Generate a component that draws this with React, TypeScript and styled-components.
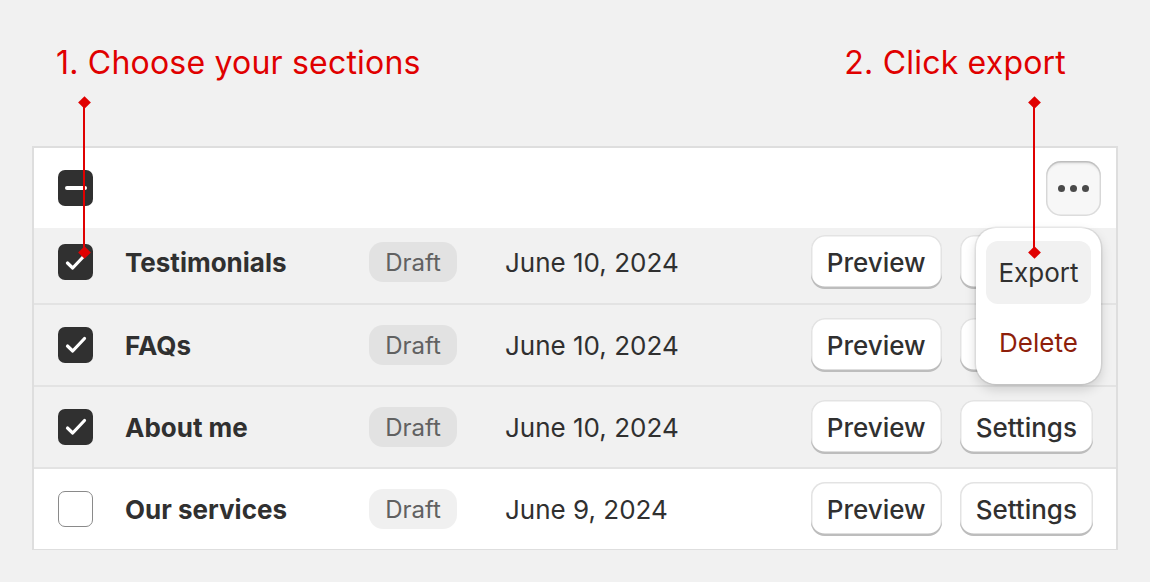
import React, { ReactElement } from 'react'
import styled, { createGlobalStyle } from 'styled-components'

const GlobalStyle = createGlobalStyle`
  html, body {
    margin: 0;
    padding: 0;
    background: #f1f1f1;
  }
  body {
    font-family: Inter, "Noto Sans", sans-serif;
    color: #303030;
  }
`

const Page = styled.div`
  position: relative;
  width: 1150px;
  height: 582px;
  overflow: hidden;
`

const Titles = styled.div`
  display: flex;
  justify-content: space-between;
  padding: 44px 84px 0 56px;
  height: 38px;
`

const Title = styled.div`
  font-size: 32px;
  line-height: 38px;
  color: #e00000;
  letter-spacing: 0.2px;
`

const Card = styled.div`
  margin: 64px 0 0 32px;
  width: 1082px;
  border: 2px solid #dedede;
  border-bottom-width: 1.5px;
  background: #fff;
`

const Header = styled.div`
  display: flex;
  align-items: center;
  justify-content: space-between;
  height: 80px;
  padding: 0 15px 0 24px;
  background: #fff;
`

const Row = styled.div<{ $selected: boolean; $first?: boolean }>`
  display: grid;
  grid-template-columns: 35px 276px 136px 1fr auto;
  align-items: center;
  height: ${(p) => (p.$first ? '75px' : '82px')};
  padding: 0 23px ${(p) => (p.$first ? '7px' : '0')} 24px;
  box-sizing: border-box;
  background: ${(p) => (p.$selected ? '#f1f1f1' : '#fff')};
  border-top: ${(p) => (p.$first ? 'none' : '2px solid #e3e3e3')};
`

const Box = styled.div<{ $checked: boolean }>`
  width: 35px;
  height: 36px;
  box-sizing: border-box;
  border-radius: 7px;
  display: flex;
  align-items: center;
  justify-content: center;
  background: ${(p) => (p.$checked ? '#303030' : '#fff')};
  border: ${(p) => (p.$checked ? 'none' : '1.5px solid #8a8a8a')};
`

const Minus = styled.span`
  width: 22px;
  height: 3.5px;
  border-radius: 2px;
  background: #fff;
`

const Name = styled.div`
  padding-left: 32px;
  font-size: 26px;
  font-weight: 700;
  color: #303030;
`

const Badge = styled.span`
  justify-self: start;
  display: inline-flex;
  align-items: center;
  justify-content: center;
  width: 88px;
  height: 40px;
  border-radius: 14px;
  background: rgba(0, 0, 0, 0.06);
  color: #616161;
  font-size: 24px;
`

const DateText = styled.div`
  font-size: 26px;
  color: #303030;
`

const Actions = styled.div`
  display: flex;
  gap: 18px;
`

const Button = styled.button`
  height: 54px;
  padding: 0 16px;
  border: none;
  border-radius: 14px;
  background: #fff;
  font-family: Inter, "Noto Sans", sans-serif;
  font-size: 26px;
  font-weight: 500;
  color: #303030;
  box-shadow: inset 0 -2.5px 0 #bdbdbd, inset 0 0 0 1.5px #e3e3e3;
`

const MoreWrap = styled.div`
  position: relative;
`

const MoreButton = styled.button`
  width: 55px;
  height: 55px;
  border: none;
  border-radius: 15px;
  background: #f7f7f7;
  display: flex;
  align-items: center;
  justify-content: center;
  gap: 5px;
  box-shadow: inset 0 3px 3px -1px rgba(0, 0, 0, 0.16), inset 0 0 0 1.5px #dcdcdc;
`

const Dot = styled.span`
  width: 7px;
  height: 7px;
  border-radius: 50%;
  background: #4a4a4a;
`

const Menu = styled.div`
  position: absolute;
  top: 67px;
  right: 0;
  z-index: 2;
  width: 125px;
  box-sizing: border-box;
  padding: 13px 10px 10px;
  display: flex;
  flex-direction: column;
  gap: 7px;
  background: #fff;
  border-radius: 20px;
  box-shadow: 0 5px 12px rgba(0, 0, 0, 0.16), 0 0 0 1.5px rgba(0, 0, 0, 0.07);
`

const MenuItem = styled.div<{ $active?: boolean; $danger?: boolean }>`
  height: 63px;
  display: flex;
  align-items: center;
  justify-content: center;
  border-radius: 12px;
  font-size: 26px;
  background: ${(p) => (p.$active ? '#f1f1f1' : 'transparent')};
  color: ${(p) => (p.$danger ? '#8e1f0b' : '#303030')};
`

const Pointer = styled.div<{ $left: number }>`
  position: absolute;
  left: ${(p) => p.$left}px;
  top: 102px;
  width: 2px;
  height: 150px;
  background: #e00000;
  z-index: 3;
  &::before,
  &::after {
    content: '';
    position: absolute;
    left: -3.5px;
    width: 9px;
    height: 9px;
    background: #e00000;
    transform: rotate(45deg);
  }
  &::before {
    top: -4.5px;
  }
  &::after {
    bottom: -4.5px;
  }
`

function Check(): ReactElement {
  return (
    <svg width="24" height="24" viewBox="0 0 24 24" fill="none">
      <path d="M3.5 13l5.2 5L20.5 5.5" stroke="#fff" strokeWidth="3.2" strokeLinecap="round" strokeLinejoin="round" />
    </svg>
  )
}

const rows = [
  { name: 'Testimonials', date: 'June 10, 2024', checked: true },
  { name: 'FAQs', date: 'June 10, 2024', checked: true },
  { name: 'About me', date: 'June 10, 2024', checked: true },
  { name: 'Our services', date: 'June 9, 2024', checked: false },
]

export default function App(): ReactElement {
  return (
    <Page>
      <GlobalStyle />
      <Titles>
        <Title>1. Choose your sections</Title>
        <Title>2. Click export</Title>
      </Titles>
      <Card>
        <Header>
          <Box $checked>
            <Minus />
          </Box>
          <MoreWrap>
            <MoreButton>
              <Dot />
              <Dot />
              <Dot />
            </MoreButton>
            <Menu>
              <MenuItem $active>Export</MenuItem>
              <MenuItem $danger>Delete</MenuItem>
            </Menu>
          </MoreWrap>
        </Header>
        {rows.map((r, i) => (
          <Row key={r.name} $selected={r.checked} $first={i == 0}>
            <Box $checked={r.checked}>{r.checked && <Check />}</Box>
            <Name>{r.name}</Name>
            <Badge>Draft</Badge>
            <DateText>{r.date}</DateText>
            <Actions>
              <Button>Preview</Button>
              <Button>Settings</Button>
            </Actions>
          </Row>
        ))}
      </Card>
      <Pointer $left={83} />
      <Pointer $left={1033} />
    </Page>
  )
}
